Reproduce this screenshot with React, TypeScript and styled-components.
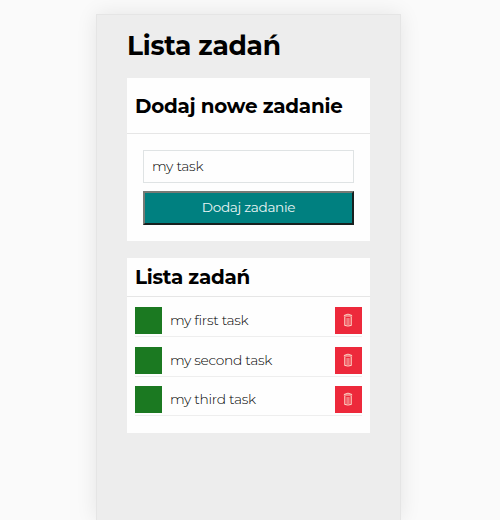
import React, { useState } from "react";
import styled, { createGlobalStyle } from "styled-components";

const GlobalStyle = createGlobalStyle`
  * { box-sizing: border-box; }
  body {
    margin: 0;
    background: #fafafa;
    color: #000;
    font-family: Montserrat, Inter, sans-serif;
    font-size: 13.8px;
    overflow: hidden;
  }
`;

const Container = styled.main`
  width: 305px;
  height: 506px;
  margin: 14px 0 0 96px;
  padding: 0 30px;
  background: #ededed;
  border: 1px solid #e5e5e5;
  border-bottom: 0;
  box-shadow: 0 0 20px rgba(0, 0, 0, 0.09);
`;

const Title = styled.h1`
  margin: 0;
  height: 63px;
  line-height: 62px;
  font-size: 26.5px;
  font-weight: 700;
  letter-spacing: -0.28px;
  white-space: nowrap;
`;

const Section = styled.section<{ $height: number }>`
  height: ${(p) => p.$height}px;
  margin-bottom: 16.5px;
  background: #fefefe;
`;

const SectionTitle = styled.h2<{ $height: number }>`
  margin: 0;
  height: ${(p) => p.$height}px;
  line-height: ${(p) => p.$height}px;
  padding-left: 8px;
  border-bottom: 1px solid #e6e6e6;
  font-size: 19.9px;
  font-weight: 700;
  letter-spacing: -0.24px;
  white-space: nowrap;
`;

const Form = styled.form`
  display: flex;
  flex-direction: column;
  gap: 8px;
  padding: 16px 16px 0;
`;

const Input = styled.input`
  height: 33px;
  padding: 0 8px 2px;
  border: 1px solid #dfe3e4;
  border-radius: 0;
  background: #fefefe;
  color: #000;
  font: 300 13.8px Montserrat, Inter, sans-serif;
  letter-spacing: -0.27px;
  outline: none;
`;

const SubmitButton = styled.button`
  height: 34px;
  padding: 0 0 2px;
  border: 2px solid;
  border-color: #777a75 #17201f #17201f #777a75;
  background: #008080;
  color: #eaf5f5;
  font: 400 13.6px Montserrat, Inter, sans-serif;
  letter-spacing: -0.32px;
`;

const TaskList = styled.ul`
  margin: 0;
  padding: 1px 8px;
  list-style: none;
`;

const Task = styled.li`
  display: grid;
  grid-template-columns: 27px 1fr 27px;
  align-items: start;
  column-gap: 8px;
  height: 39.6px;
  padding-top: 9.5px;
  border-bottom: 1px solid #eee;
`;

const TaskName = styled.span`
  color: #000;
  font-weight: 300;
  line-height: 26px;
  letter-spacing: -0.3px;
  white-space: nowrap;
`;

const ToggleButton = styled.button`
  width: 27px;
  height: 27px;
  padding: 0;
  border: 0;
  background: #1b7921;
`;

const DeleteButton = styled(ToggleButton)`
  display: flex;
  align-items: center;
  justify-content: center;
  padding: 0 1px 1px 0;
  background: #ed293b;
`;

const TrashIcon = () => (
  <svg width="10" height="14" viewBox="0 0 10 14" fill="none" stroke="#fbd8c8">
    <path d="M1 2.5Q5-.2 9 2.5M.8 3h8.4" />
    <path d="M1.8 4v8.3Q5 13.8 8.2 12.3V4" strokeWidth="1.1" />
    <path d="M4.1 5v7M5.9 5v7" strokeWidth=".8" />
  </svg>
);

const tasks = ["my first task", "my second task", "my third task"];

export default function App() {
  const [value, setValue] = useState("my task");
  return (
    <>
      <GlobalStyle />
      <Container>
        <Title>Lista zadań</Title>
        <Section $height={163}>
          <SectionTitle $height={56}>Dodaj nowe zadanie</SectionTitle>
          <Form onSubmit={(e) => e.preventDefault()}>
            <Input value={value} onChange={(e) => setValue(e.target.value)} />
            <SubmitButton>Dodaj zadanie</SubmitButton>
          </Form>
        </Section>
        <Section $height={175}>
          <SectionTitle $height={39}>Lista zadań</SectionTitle>
          <TaskList>
            {tasks.map((name) => (
              <Task key={name}>
                <ToggleButton aria-label="Ukończ" />
                <TaskName>{name}</TaskName>
                <DeleteButton aria-label="Usuń"><TrashIcon /></DeleteButton>
              </Task>
            ))}
          </TaskList>
        </Section>
      </Container>
    </>
  );
}
